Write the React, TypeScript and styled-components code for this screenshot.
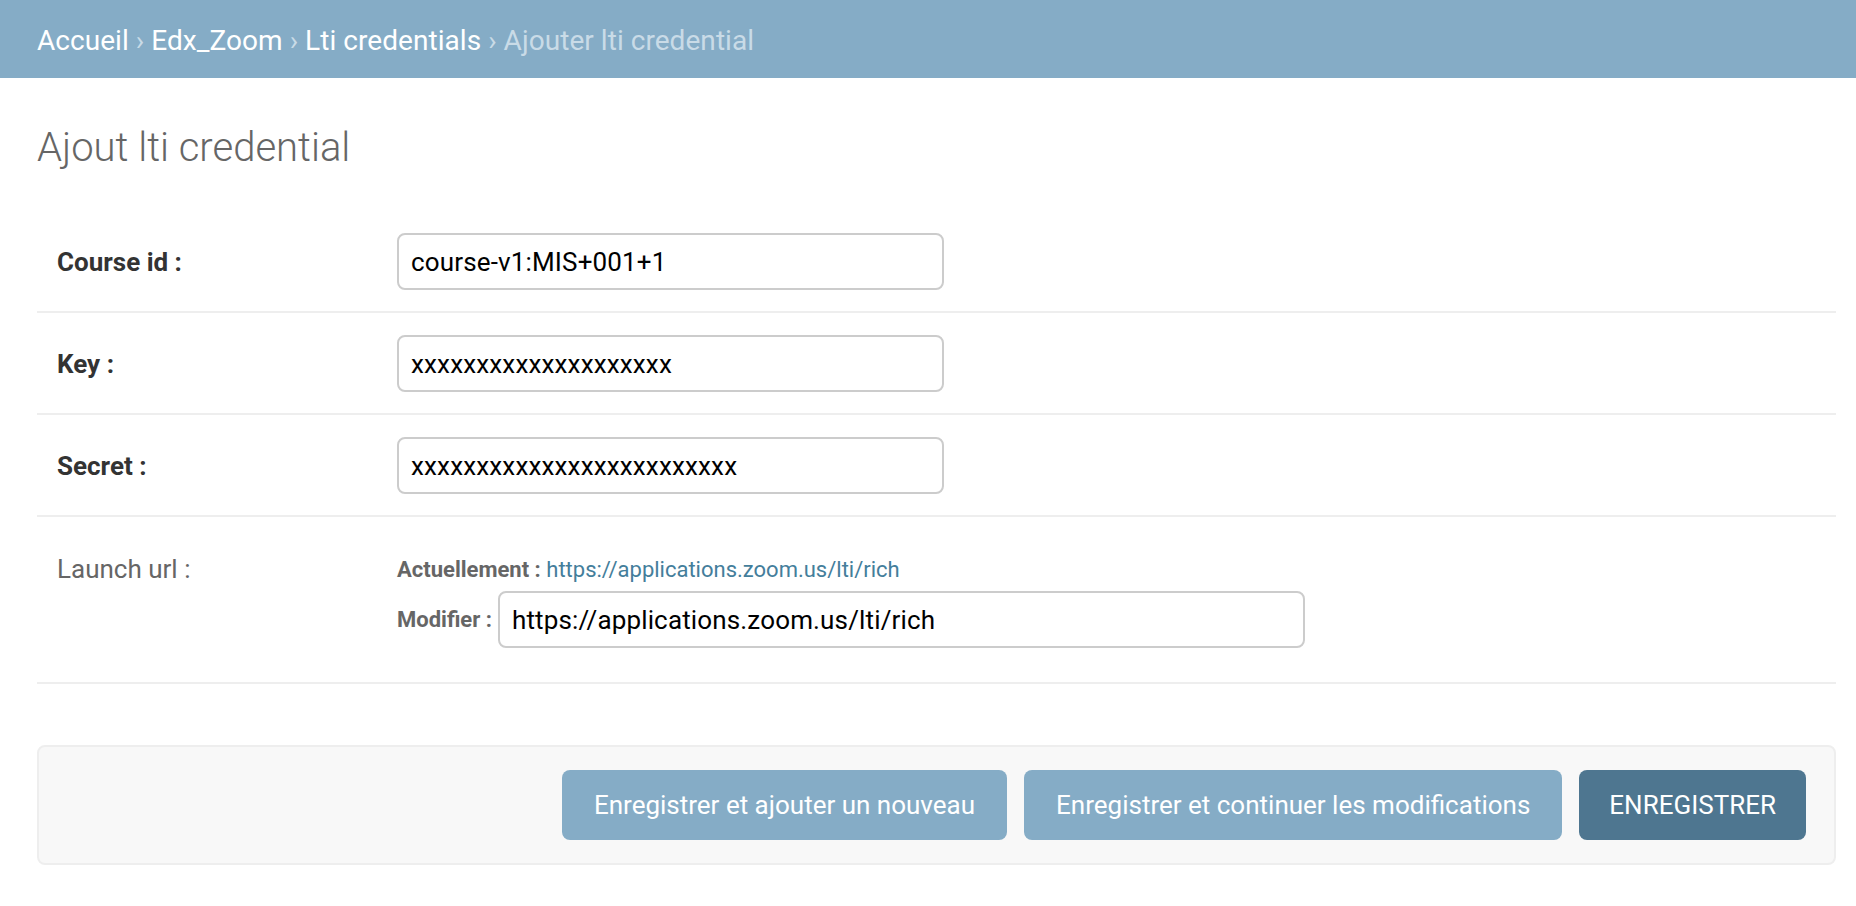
import React from "react";
import styled, { createGlobalStyle } from "styled-components";

const GlobalStyle = createGlobalStyle`
  html, body {
    margin: 0;
    padding: 0;
    background: #ffffff;
  }
  body {
    font-family: Roboto, "Liberation Sans", Arial, sans-serif;
    color: #333333;
  }
  * { box-sizing: border-box; }
`;

const Breadcrumbs = styled.nav`
  background: #85acc6;
  padding: 22px 37px 18px;
  font-size: 28px;
  line-height: 38px;
  color: #c9dbe7;
  white-space: nowrap;
  letter-spacing: 0.05px;
`;

const Crumb = styled.a`
  color: #ffffff;
  text-decoration: none;
`;

const Sep = styled.span`
  color: #c9dbe7;
`;

const Content = styled.main`
  padding: 46px 20px 0 37px;
`;

const Title = styled.h1`
  margin: 0 0 39px;
  font-size: 40px;
  line-height: 48px;
  font-weight: 300;
  color: #666666;
`;

const Fieldset = styled.fieldset`
  margin: 0;
  padding: 0;
  border: none;
`;

const Row = styled.div<{ $tall?: boolean }>`
  display: flex;
  align-items: ${(p) => (p.$tall ? "flex-start" : "center")};
  padding: ${(p) => (p.$tall ? "33px 20px 34px" : "22px 20px 21px")};
  border-bottom: 2px solid #eeeeee;
`;

const Label = styled.label<{ $required?: boolean; $top?: boolean }>`
  flex: 0 0 340px;
  font-size: 26px;
  line-height: 30px;
  padding-top: ${(p) => (p.$top ? "4px" : "0")};
  font-weight: ${(p) => (p.$required ? 700 : 400)};
  color: ${(p) => (p.$required ? "#333333" : "#666666")};
`;

const TextInput = styled.input<{ $wide?: boolean }>`
  display: block;
  width: ${(p) => (p.$wide ? "807px" : "547px")};
  height: 57px;
  margin: 0;
  padding: 0 12px;
  border: 2px solid #cccccc;
  border-radius: 8px;
  background: #ffffff;
  font-family: Roboto, "Liberation Sans", Arial, sans-serif;
  font-size: 26px;
  letter-spacing: 0.15px;
  color: #000000;
  outline: none;
`;

const UrlField = styled.div`
  display: flex;
  flex-direction: column;
`;

const UrlLine = styled.div`
  display: flex;
  align-items: center;
  font-size: 22px;
  line-height: 40px;
  font-weight: 700;
  color: #666666;
  white-space: pre;
`;

const ChangeLine = styled(UrlLine)`
  margin-top: 1px;
  gap: 6px;
`;

const CurrentLink = styled.a`
  font-weight: 400;
  color: #447e9b;
  text-decoration: none;
`;

const SubmitRow = styled.div`
  margin-top: 61px;
  display: flex;
  justify-content: flex-end;
  gap: 17px;
  padding: 23px 28px;
  background: #f8f8f8;
  border: 2px solid #eeeeee;
  border-radius: 8px;
`;

const Button = styled.button<{ $primary?: boolean }>`
  height: 70px;
  padding: 0 ${(p) => (p.$primary ? "30px" : "32px")};
  border: none;
  border-radius: 8px;
  background: ${(p) => (p.$primary ? "#4e7690" : "#85acc6")};
  color: #ffffff;
  font-family: Roboto, "Liberation Sans", Arial, sans-serif;
  font-size: 26px;
  font-weight: 400;
  cursor: pointer;
  white-space: nowrap;
`;

const fields = [
  { label: "Course id :", value: "course-v1:MIS+001+1" },
  { label: "Key :", value: "xxxxxxxxxxxxxxxxxxxx" },
  { label: "Secret :", value: "xxxxxxxxxxxxxxxxxxxxxxxxx" },
];

export default function App() {
  const url = "https://applications.zoom.us/lti/rich";
  return (
    <>
      <GlobalStyle />
      <Breadcrumbs>
        <Crumb href="#">Accueil</Crumb>
        <Sep> › </Sep>
        <Crumb href="#">Edx_Zoom</Crumb>
        <Sep> › </Sep>
        <Crumb href="#">Lti credentials</Crumb>
        <Sep> › </Sep>
        Ajouter lti credential
      </Breadcrumbs>
      <Content>
        <Title>Ajout lti credential</Title>
        <form onSubmit={(e) => e.preventDefault()}>
          <Fieldset>
            {fields.map((f) => (
              <Row key={f.label}>
                <Label $required>{f.label}</Label>
                <TextInput type="text" defaultValue={f.value} />
              </Row>
            ))}
            <Row $tall>
              <Label $top>Launch url :</Label>
              <UrlField>
                <UrlLine>
                  Actuellement : <CurrentLink href="#">{url}</CurrentLink>
                </UrlLine>
                <ChangeLine>
                  Modifier :
                  <TextInput $wide type="text" defaultValue={url} />
                </ChangeLine>
              </UrlField>
            </Row>
          </Fieldset>
          <SubmitRow>
            <Button type="button">Enregistrer et ajouter un nouveau</Button>
            <Button type="button">Enregistrer et continuer les modifications</Button>
            <Button type="submit" $primary>ENREGISTRER</Button>
          </SubmitRow>
        </form>
      </Content>
    </>
  );
}
